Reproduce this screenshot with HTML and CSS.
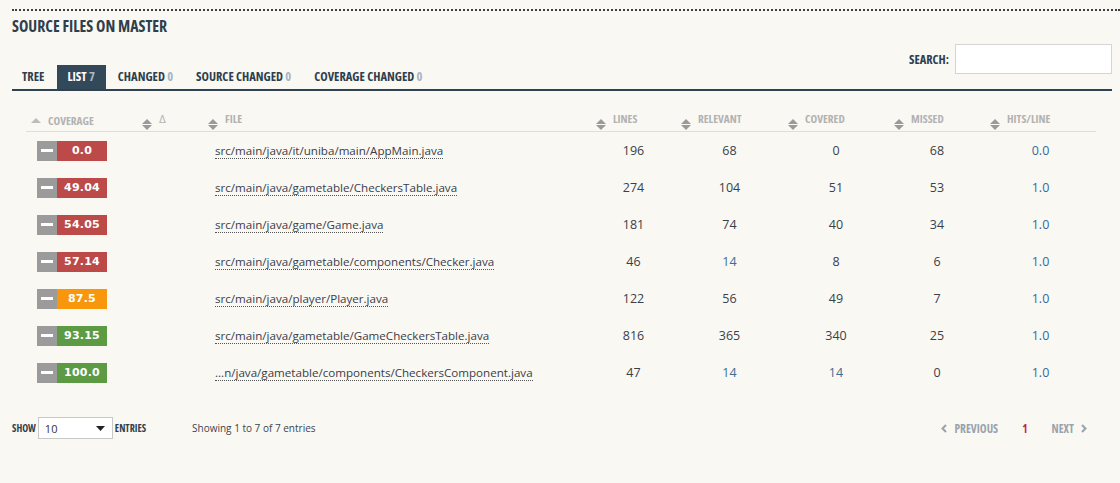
FILE: index.html
```html
<!DOCTYPE html>
<html>
<head>
<meta charset="utf-8">
<link rel="stylesheet" href="styles.css">
</head>
<body>
<div class="page">
  <div class="dotted"></div>
  <h2 class="title">SOURCE FILES ON MASTER</h2>
  <div class="toolbar">
    <ul class="tabs">
      <li class="tab">TREE</li>
      <li class="tab active">LIST <span class="count">7</span></li>
      <li class="tab">CHANGED <span class="count">0</span></li>
      <li class="tab">SOURCE CHANGED <span class="count">0</span></li>
      <li class="tab">COVERAGE CHANGED <span class="count">0</span></li>
    </ul>
    <label class="search">SEARCH: <input type="text" class="search-input"></label>
  </div>

  <table class="files">
    <colgroup>
      <col style="width:111px"><col style="width:66px"><col style="width:388px"><col style="width:85px"><col style="width:107px"><col style="width:106px"><col style="width:96px"><col style="width:111px">
    </colgroup>
    <thead>
      <tr>
        <th><span class="sort asc"><i class="up"></i></span>COVERAGE</th>
        <th><span class="sort"><i class="up"></i><i class="down"></i></span><span class="delta">&Delta;</span></th>
        <th><span class="sort"><i class="up"></i><i class="down"></i></span>FILE</th>
        <th><span class="sort"><i class="up"></i><i class="down"></i></span>LINES</th>
        <th><span class="sort"><i class="up"></i><i class="down"></i></span>RELEVANT</th>
        <th><span class="sort"><i class="up"></i><i class="down"></i></span>COVERED</th>
        <th><span class="sort"><i class="up"></i><i class="down"></i></span>MISSED</th>
        <th><span class="sort"><i class="up"></i><i class="down"></i></span>HITS/LINE</th>
      </tr>
    </thead>
    <tbody>
      <tr>
        <td class="cov"><span class="badge"><span class="minus"><i></i></span><span class="pct red">0.0</span></span></td>
        <td></td>
        <td class="file"><a href="#">src/main/java/it/uniba/main/AppMain.java</a></td>
        <td class="num">196</td><td class="num">68</td><td class="num">0</td><td class="num">68</td><td class="num hits">0.0</td>
      </tr>
      <tr>
        <td class="cov"><span class="badge"><span class="minus"><i></i></span><span class="pct red">49.04</span></span></td>
        <td></td>
        <td class="file"><a href="#">src/main/java/gametable/CheckersTable.java</a></td>
        <td class="num">274</td><td class="num">104</td><td class="num">51</td><td class="num">53</td><td class="num hits">1.0</td>
      </tr>
      <tr>
        <td class="cov"><span class="badge"><span class="minus"><i></i></span><span class="pct red">54.05</span></span></td>
        <td></td>
        <td class="file"><a href="#">src/main/java/game/Game.java</a></td>
        <td class="num">181</td><td class="num">74</td><td class="num">40</td><td class="num">34</td><td class="num hits">1.0</td>
      </tr>
      <tr>
        <td class="cov"><span class="badge"><span class="minus"><i></i></span><span class="pct red">57.14</span></span></td>
        <td></td>
        <td class="file"><a href="#">src/main/java/gametable/components/Checker.java</a></td>
        <td class="num">46</td><td class="num blue">14</td><td class="num">8</td><td class="num">6</td><td class="num hits">1.0</td>
      </tr>
      <tr>
        <td class="cov"><span class="badge"><span class="minus"><i></i></span><span class="pct orange">87.5</span></span></td>
        <td></td>
        <td class="file"><a href="#">src/main/java/player/Player.java</a></td>
        <td class="num">122</td><td class="num">56</td><td class="num">49</td><td class="num">7</td><td class="num hits">1.0</td>
      </tr>
      <tr>
        <td class="cov"><span class="badge"><span class="minus"><i></i></span><span class="pct green">93.15</span></span></td>
        <td></td>
        <td class="file"><a href="#">src/main/java/gametable/GameCheckersTable.java</a></td>
        <td class="num">816</td><td class="num">365</td><td class="num">340</td><td class="num">25</td><td class="num hits">1.0</td>
      </tr>
      <tr>
        <td class="cov"><span class="badge"><span class="minus"><i></i></span><span class="pct green">100.0</span></span></td>
        <td></td>
        <td class="file"><a href="#">...n/java/gametable/components/CheckersComponent.java</a></td>
        <td class="num">47</td><td class="num blue">14</td><td class="num blue">14</td><td class="num">0</td><td class="num hits">1.0</td>
      </tr>
    </tbody>
  </table>

  <div class="footer">
    <div class="length">
      <span class="cond">SHOW</span>
      <span class="select"><span>10</span><svg width="9" height="5" viewBox="0 0 9 5"><path d="M0 0h9L4.5 5z" fill="#222"/></svg></span>
      <span class="cond">ENTRIES</span>
    </div>
    <div class="info">Showing 1 to 7 of 7 entries</div>
    <div class="paging">
      <span class="pg"><svg width="6" height="9" viewBox="0 0 6 9"><path d="M5 1L1.5 4.5 5 8" fill="none" stroke="#9aa3ad" stroke-width="2"/></svg> PREVIOUS</span>
      <span class="pg current">1</span>
      <span class="pg">NEXT <svg width="6" height="9" viewBox="0 0 6 9"><path d="M1 1l3.5 3.5L1 8" fill="none" stroke="#9aa3ad" stroke-width="2"/></svg></span>
    </div>
  </div>
</div>
</body>
</html>
```

FILE: styles.css
```css
html, body {
  margin: 0;
  padding: 0;
  background: #f9f8f3;
}
body {
  font-family: "Open Sans", "Liberation Sans", sans-serif;
  color: #333;
}
.page {
  padding: 9px 8px 0 12px;
}
.dotted {
  border-top: 2px dotted #3a3f45;
  margin-right: -8px;
}
.title,
.tab,
.search,
.files th,
.cond,
.pg {
  font-family: "Open Sans", "DejaVu Sans", sans-serif;
  font-stretch: 75%;
  font-weight: 700;
}
.title {
  margin: 7px 0 0 0;
  font-size: 15.8px;
  line-height: 16px;
  color: #2f3e4c;
}
.toolbar {
  display: flex;
  justify-content: space-between;
  align-items: flex-end;
  border-bottom: 2px solid #2e4252;
  margin-top: 10px;
}
.tabs {
  list-style: none;
  margin: 0;
  padding: 0;
  display: flex;
  gap: 2px;
}
.tab {
  font-size: 12.5px;
  line-height: 24px;
  padding: 0 11px 0 10px;
  color: #2f3e4c;
}
.tab .count {
  color: #a3b4c4;
}
.tab.active {
  background: #33495a;
  color: #fff;
}
.tab.active .count {
  color: #a9bccc;
}
.search {
  display: flex;
  align-items: center;
  gap: 6px;
  font-size: 12.4px;
  color: #2f3e4c;
  margin-bottom: 15px;
}
.search-input {
  border: 1px solid #d5d5d5;
  background: #fff;
  margin: 0;
  padding: 0 4px;
  box-sizing: content-box;
  width: 147px;
  height: 28px;
}
.files {
  border-collapse: collapse;
  table-layout: fixed;
  width: 1070px;
  margin: 18px 0 0 14px;
}
.files th {
  text-align: left;
  font-size: 11.3px;
  color: #b2b2b2;
  padding: 0 0 0 5px;
  height: 22px;
  vertical-align: middle;
  border-bottom: 1px solid #e0ded8;
  white-space: nowrap;
}
.sort {
  display: inline-flex;
  flex-direction: column;
  gap: 1px;
  vertical-align: -1px;
  margin-right: 7px;
}
.sort i {
  display: block;
  width: 0;
  height: 0;
  border-left: 5px solid transparent;
  border-right: 5px solid transparent;
}
.sort .up {
  border-bottom: 5px solid #9a9a9a;
}
.sort .down {
  border-top: 5px solid #9a9a9a;
}
.sort.asc {
  vertical-align: 2px;
}
.sort.asc .up {
  border-bottom-color: #bcbcbc;
}
.delta {
  font-family: "DejaVu Sans", sans-serif;
  font-stretch: normal;
  font-weight: normal;
  font-size: 10px;
  color: #b6b6b6;
}
.files td {
  height: 37px;
  padding: 0;
  font-size: 12.5px;
}
.files td.cov {
  padding-left: 11px;
}
.badge {
  display: inline-flex;
  height: 20px;
  vertical-align: middle;
}
.minus {
  width: 20px;
  background: #9b9b9b;
  display: flex;
  align-items: center;
  justify-content: center;
}
.minus i {
  display: block;
  width: 12px;
  height: 3px;
  background: #fff;
}
.pct {
  width: 50px;
  display: flex;
  align-items: center;
  justify-content: center;
  color: #fff;
  font-family: "DejaVu Sans", "Liberation Sans", sans-serif;
  font-weight: bold;
  font-size: 11px;
  letter-spacing: 0.2px;
}
.red { background: #bb4a48; }
.orange { background: #f8970b; }
.green { background: #5c9a44; }
.files td.file {
  padding-left: 12px;
}
.file a {
  color: #3a3d4a;
  font-size: 11.6px;
  text-decoration: none;
  border-bottom: 1px dotted #555;
  white-space: nowrap;
}
.files td.num {
  text-align: center;
  color: #3c3f48;
}
.files td.num.blue {
  color: #3f6d93;
}
.files td.hits {
  color: #346a9c;
}
.footer {
  display: flex;
  align-items: center;
  margin-top: 26px;
}
.length {
  display: flex;
  align-items: center;
  gap: 2px;
}
.cond {
  font-size: 10px;
  color: #2f3e4c;
}
.select {
  border: 1px solid #c8c8c8;
  background: #fff;
  display: flex;
  align-items: center;
  justify-content: space-between;
  padding: 0 7px 0 6px;
  box-sizing: border-box;
  width: 75px;
  height: 22px;
  font-size: 11px;
  color: #333;
}
.info {
  margin-left: 46px;
  font-size: 10px;
  color: #3d4450;
}
.paging {
  margin-left: auto;
  margin-right: 25px;
  display: flex;
  align-items: center;
  gap: 24px;
}
.pg {
  font-size: 11.5px;
  color: #9aa3ad;
  display: flex;
  align-items: center;
  gap: 7px;
}
.pg.current {
  color: #c0284d;
}
```
